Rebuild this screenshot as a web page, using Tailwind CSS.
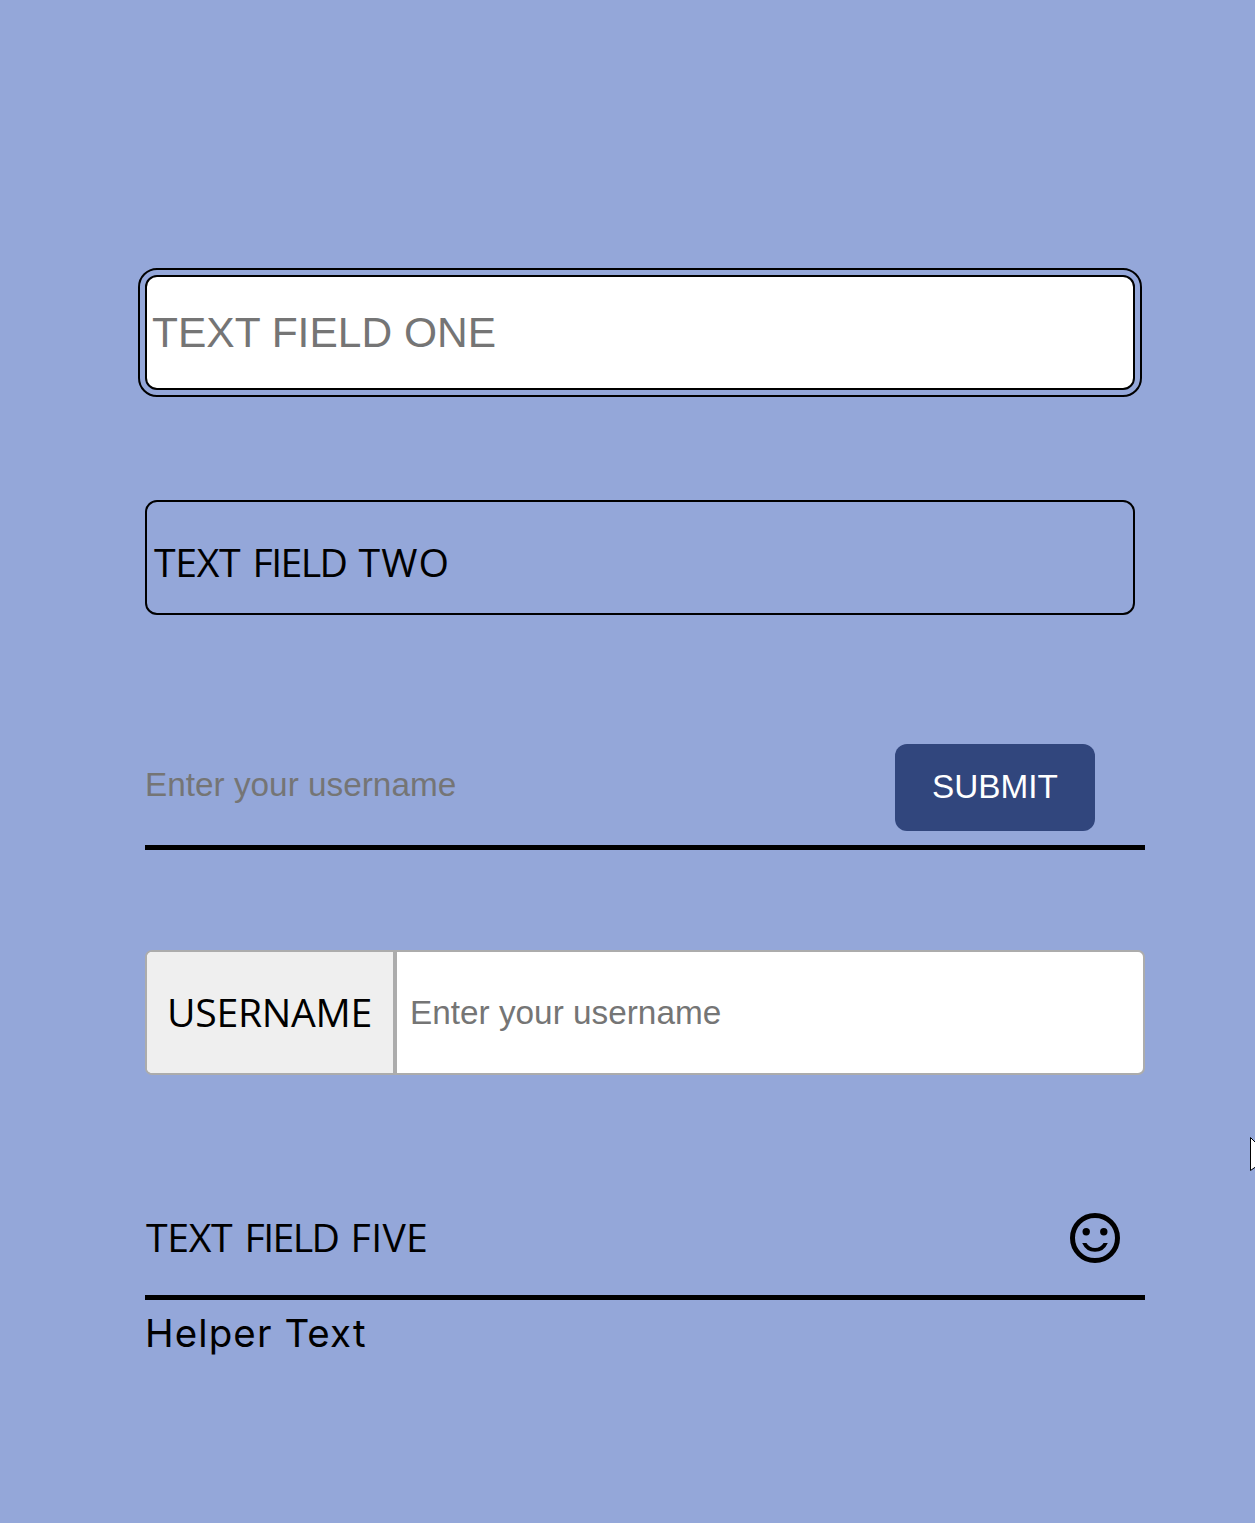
<!DOCTYPE html>
<html lang="en">
<head>
<meta charset="utf-8">
<title>Text Fields</title>
<script src="https://cdn.jsdelivr.net/npm/@tailwindcss/browser@4"></script>
</head>
<body class="relative h-[1523px] overflow-hidden bg-[#94a7d9] font-['Open_Sans',sans-serif] text-black">
<main class="flex w-[1145px] flex-col pl-[145px] pt-[275px]">
  <input class="h-[115px] w-[990px] rounded-[12px] border-2 border-black bg-white px-[5px] font-['Liberation_Sans',sans-serif] text-[42.5px] outline-2 outline-offset-[5px] outline-black placeholder:text-[#757575]" placeholder="TEXT FIELD ONE">

  <div class="mt-[110px] flex h-[115px] w-[990px] items-center rounded-[12px] border-2 border-black px-[7px] pt-[8px]">
    <label class="text-[39.2px] leading-[60px] [word-spacing:2px] whitespace-nowrap"><span class="tracking-[-0.3px]">TEXT</span> <span class="tracking-[-1.6px]">FIELD</span> <span class="tracking-[1px]">TWO</span></label>
  </div>

  <div class="mt-[110px] flex h-[125px] items-center border-b-[5px] border-black">
    <input class="w-[750px] font-['Liberation_Sans',sans-serif] text-[33.33px] outline-none placeholder:text-[#757575]" placeholder="Enter your username">
    <button class="mt-[4px] h-[87px] w-[200px] rounded-[12px] bg-[#31467d] font-['Liberation_Sans',sans-serif] text-[33.33px] text-white">SUBMIT</button>
  </div>

  <div class="mt-[100px] flex h-[125px] overflow-hidden rounded-[7px] border-2 border-[#acacac] bg-white">
    <label class="flex w-[250px] items-center border-r-4 border-[#acacac] bg-[#efefef] pb-px pl-[20px] text-[39.2px] leading-[60px] tracking-[-0.3px] whitespace-nowrap">USERNAME</label>
    <input class="w-[600px] pl-[13px] font-['Liberation_Sans',sans-serif] text-[33.33px] outline-none placeholder:text-[#757575]" placeholder="Enter your username">
  </div>

  <div class="mt-[100px] flex h-[125px] items-center justify-between border-b-[5px] border-black pt-[6px] pr-[25px]">
    <label class="pb-[2px] pl-px text-[39.2px] leading-[60px] [word-spacing:2px] whitespace-nowrap"><span class="tracking-[-0.3px]">TEXT</span> <span class="tracking-[-1.6px]">FIELD</span> <span class="tracking-[0.3px]">FIVE</span></label>
    <svg class="size-[50px]" viewBox="0 0 50 50" fill="none" stroke="#000">
      <circle cx="25" cy="25" r="22.5" stroke-width="5"/>
      <circle cx="16.2" cy="18.7" r="3.7" fill="#000" stroke="none"/>
      <circle cx="33.8" cy="18.7" r="3.7" fill="#000" stroke="none"/>
      <path d="M12.2 30H16.4Q19.5 35 25 35T33.6 30H37.8Q34 38.8 25 38.8T12.2 30Z" fill="#000" stroke="none"/>
    </svg>
  </div>
  <p class="mt-[3px] font-['Inter',sans-serif] text-[38.5px] leading-[60px] tracking-[1.1px] whitespace-nowrap">Helper Text</p>
</main>
<svg class="absolute right-0 top-[1136px] h-[36px] w-[5px]" viewBox="0 0 5 36"><path d="M.5 1.5L24 25H14L.5 34.5Z" fill="#fff" stroke="#000"/></svg>
</body>
</html>
